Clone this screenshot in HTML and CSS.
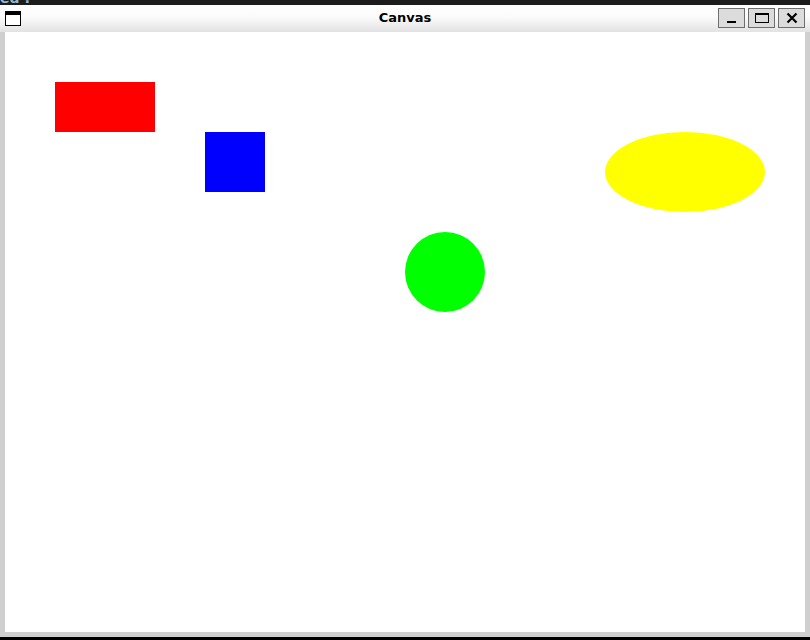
FILE: index.html
```html
<!DOCTYPE html>
<html>
<head>
<meta charset="utf-8">
<title>Canvas</title>
<link rel="stylesheet" href="styles.css">
</head>
<body>
<div class="topbar"><span class="toptext">ed :</span></div>
<div class="window">
  <div class="titlebar">
    <div class="appicon"></div>
    <div class="title">Canvas</div>
    <div class="buttons">
      <div class="btn"><span class="min"></span></div>
      <div class="btn"><span class="max"></span></div>
      <div class="btn">
        <svg width="12" height="12" viewBox="0 0 12 12"><path d="M1.5 1.5 L10.5 10.5 M10.5 1.5 L1.5 10.5" stroke="#000" stroke-width="2.2" fill="none"/></svg>
      </div>
    </div>
  </div>
  <div class="frame">
    <div class="canvas">
      <div class="shape rect-red"></div>
      <div class="shape rect-blue"></div>
      <div class="shape circle-green"></div>
      <div class="shape ellipse-yellow"></div>
    </div>
  </div>
</div>
<div class="bottombar"></div>
</body>
</html>
```
FILE: styles.css
```css
html, body {
  margin: 0;
  padding: 0;
  width: 810px;
  height: 640px;
  overflow: hidden;
  background: #cfcfcf;
  font-family: "DejaVu Sans", "Liberation Sans", sans-serif;
}
.topbar {
  height: 5px;
  background: #1c1c1c;
  overflow: hidden;
  position: relative;
}
.toptext {
  position: absolute;
  left: 0;
  top: -9px;
  color: #8fb6d6;
  font-size: 14px;
  font-weight: bold;
  line-height: 14px;
}
.window {
  display: flex;
  flex-direction: column;
}
.titlebar {
  height: 27px;
  display: flex;
  align-items: center;
  position: relative;
  background: linear-gradient(#ffffff 0%, #fbfbfb 45%, #e2e2e2 100%);
}
.appicon {
  width: 14px;
  height: 10px;
  margin-left: 5px;
  border: 1px solid #000;
  border-top: 4px solid #000;
  background: #fff;
}
.title {
  position: absolute;
  left: 0;
  right: 0;
  top: 0;
  height: 27px;
  line-height: 25px;
  text-align: center;
  font-weight: bold;
  font-size: 13px;
  color: #000;
  pointer-events: none;
}
.buttons {
  margin-left: auto;
  margin-right: 5px;
  display: flex;
  gap: 3px;
  padding-bottom: 1px;
}
.btn {
  width: 25px;
  height: 18px;
  border: 1px solid #6e6e6e;
  background: #dcdcdc;
  display: flex;
  align-items: center;
  justify-content: center;
  position: relative;
}
.min {
  width: 9px;
  height: 2px;
  background: #000;
  margin-top: 7px;
}
.max {
  width: 12px;
  height: 7px;
  border: 1px solid #000;
  border-top: 2px solid #000;
}
.frame {
  padding: 0 5px 5px 5px;
  background: #cfcfcf;
}
.canvas {
  width: 800px;
  height: 600px;
  background: #fff;
  position: relative;
}
.shape {
  position: absolute;
}
.rect-red {
  left: 50px;
  top: 50px;
  width: 100px;
  height: 50px;
  background: #ff0000;
}
.rect-blue {
  left: 200px;
  top: 100px;
  width: 60px;
  height: 60px;
  background: #0000ff;
}
.circle-green {
  left: 400px;
  top: 200px;
  width: 80px;
  height: 80px;
  border-radius: 50%;
  background: #00ff00;
}
.ellipse-yellow {
  left: 600px;
  top: 100px;
  width: 160px;
  height: 80px;
  border-radius: 50%;
  background: #ffff00;
}
.bottombar {
  height: 3px;
  background: #000;
}
```
